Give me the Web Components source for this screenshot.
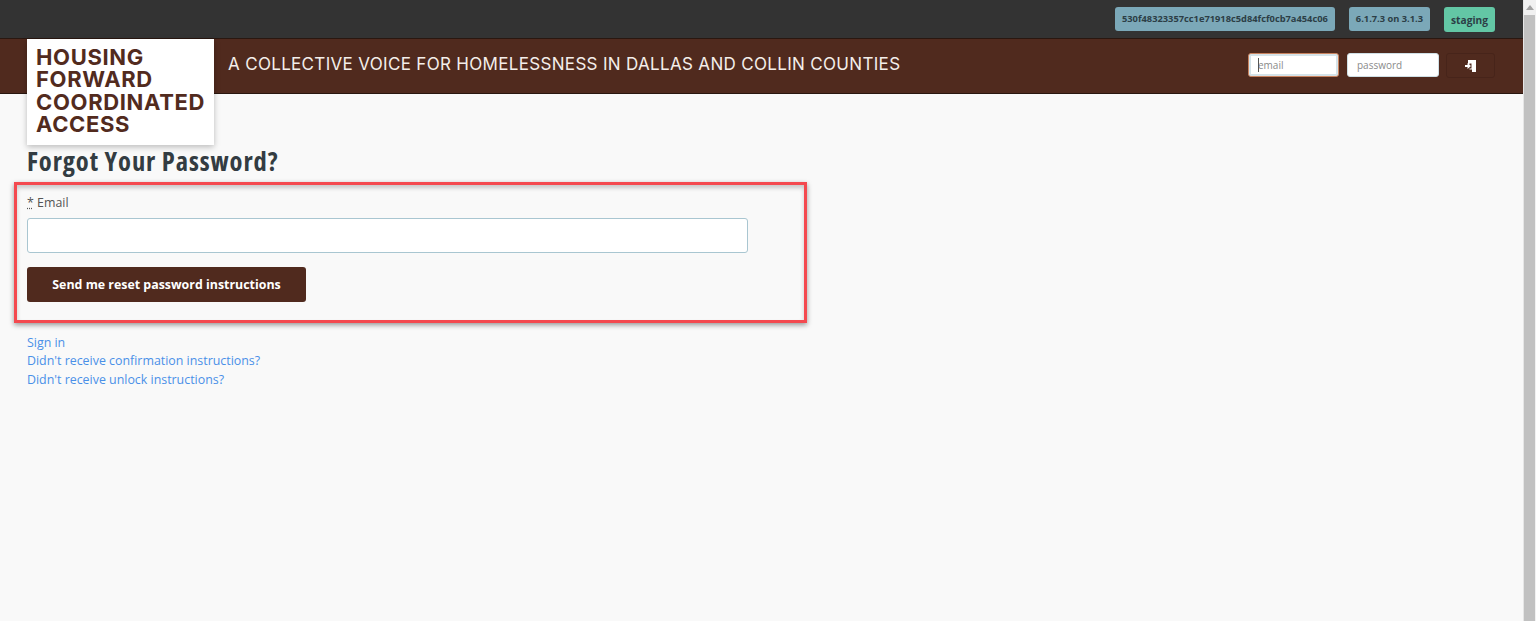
<!DOCTYPE html>
<html lang="en">
<head>
<meta charset="utf-8">
<title>Forgot Your Password?</title>
<style>
html, body { margin: 0; height: 100%; overflow: hidden; }
body { display: flex; font-family: "Open Sans", sans-serif; background: #f9f9f9; }
</style>
</head>
<body>
<app-shell>
    <top-bar>
        <env-badge>530f48323357cc1e71918c5d84fcf0cb7a454c06</env-badge>
        <env-badge>6.1.7.3 on 3.1.3</env-badge>
        <env-badge kind="staging">staging</env-badge>
    </top-bar>
    <site-header tagline="A COLLECTIVE VOICE FOR HOMELESSNESS IN DALLAS AND COLLIN COUNTIES"></site-header>
    <reset-page></reset-page>
</app-shell>
<fake-scrollbar></fake-scrollbar>

<script>
class AppShell extends HTMLElement {
    constructor() {
        super();
        this.attachShadow({ mode: 'open' });
        this.shadowRoot.innerHTML = `
            <style>
                :host { display: flex; flex-direction: column; flex: 1; min-width: 0; }
            </style>
            <slot></slot>
        `;
    }
}

class TopBar extends HTMLElement {
    constructor() {
        super();
        this.attachShadow({ mode: 'open' });
        this.shadowRoot.innerHTML = `
            <style>
                :host {
                    display: flex;
                    justify-content: flex-end;
                    align-items: flex-start;
                    gap: 14px;
                    height: 38px;
                    box-sizing: border-box;
                    padding: 7px 28px 0 0;
                    background: #333333;
                }
            </style>
            <slot></slot>
        `;
    }
}

class EnvBadge extends HTMLElement {
    constructor() {
        super();
        this.attachShadow({ mode: 'open' });
        this.shadowRoot.innerHTML = `
            <style>
                :host {
                    display: block;
                    height: 24px;
                    padding: 0 7px;
                    border-radius: 3px;
                    background: #7ba8b8;
                    color: #2c3e46;
                    font: 700 9.3px/23px "Open Sans", sans-serif;
                    white-space: nowrap;
                }
                :host([kind="staging"]) {
                    height: 25px;
                    background: #63c7a5;
                    font-size: 10.2px;
                    line-height: 26px;
                }
            </style>
            <slot></slot>
        `;
    }
}

class SiteHeader extends HTMLElement {
    constructor() {
        super();
        this.attachShadow({ mode: 'open' });
    }

    connectedCallback() {
        const tagline = this.getAttribute('tagline');
        this.shadowRoot.innerHTML = `
            <style>
                :host {
                    display: flex;
                    align-items: flex-start;
                    height: 56px;
                    box-sizing: border-box;
                    padding-left: 27px;
                    background: #502a1e;
                    border-top: 1px solid #2a1710;
                    border-bottom: 1px solid #2a1710;
                }
                .logo {
                    box-sizing: border-box;
                    width: 187px;
                    height: 106px;
                    padding: 7px 0 0 9px;
                    background: #fff;
                    color: #522b1e;
                    font: 700 22px/22.3px "Inter", "Liberation Sans", sans-serif;
                    letter-spacing: 0.65px;
                    box-shadow: 0 2px 6px rgba(0, 0, 0, 0.25);
                    position: relative;
                    z-index: 2;
                }
                .tagline {
                    margin: 15px 0 0 14px;
                    color: #f4eeea;
                    font: 400 17px/21px "Inter", "Liberation Sans", sans-serif;
                    letter-spacing: 0.32px;
                    white-space: nowrap;
                }
                form {
                    display: flex;
                    gap: 7px;
                    margin: 14px 28px 0 auto;
                }
                .email-wrap { position: relative; display: block; margin-right: 1px; }
                .email-wrap::after {
                    content: "";
                    position: absolute;
                    left: 10px;
                    top: 5px;
                    width: 1px;
                    height: 14px;
                    background: #555;
                }
                input {
                    display: block;
                    box-sizing: border-box;
                    width: 92px;
                    height: 24px;
                    padding: 0 9px;
                    border: 1px solid #cfdfe5;
                    border-radius: 3px;
                    background: #fff;
                    font: 400 10px "Open Sans", sans-serif;
                    outline: none;
                }
                input::placeholder { color: #8a8a8a; opacity: 1; }
                input.focus {
                    width: 91px;
                    border-color: #c9835f;
                    box-shadow: inset 0 0 0 2px #d5e3e9;
                }
                button {
                    box-sizing: border-box;
                    display: flex;
                    align-items: center;
                    justify-content: center;
                    width: 49px;
                    height: 25px;
                    padding: 0;
                    border: 1px solid #47241a;
                    border-radius: 3px;
                    background: #502a1e;
                }
            </style>
            <div class="logo">HOUSING<br>FORWARD<br>COORDINATED<br>ACCESS</div>
            <div class="tagline">${tagline}</div>
            <form>
                <span class="email-wrap"><input class="focus" placeholder="email" aria-label="email"></span>
                <input placeholder="password" aria-label="password">
                <button type="button" aria-label="Sign in">
                    <svg width="11" height="12" viewBox="0 0 11 12">
                        <path d="M3 0h8v12h-4v-2.500h-2.500v-1h2v-5h-2v1h-1.500z" fill="#fff"/>
                        <path d="M0 5h2.500v-2l3.500 3-3.500 3v-2h-2.500z" fill="#fff"/>
                    </svg>
                </button>
            </form>
        `;
    }
}

class ResetPage extends HTMLElement {
    constructor() {
        super();
        this.attachShadow({ mode: 'open' });
        this.shadowRoot.innerHTML = `
            <style>
                :host {
                    display: block;
                    flex: 1;
                    padding: 0 27px;
                    background: #f9f9f9;
                    color: #444;
                    font: 400 12.4px/18.6px "Open Sans", sans-serif;
                }
                h1 {
                    margin: 0;
                    height: 88px;
                    box-sizing: border-box;
                    padding-top: 49px;
                    color: #333c42;
                    font: 700 26.5px/36px "Open Sans", sans-serif;
                    font-stretch: 75%;
                    letter-spacing: 0.9px;
                    white-space: nowrap;
                }
                .form-box {
                    box-sizing: border-box;
                    width: 793px;
                    height: 141px;
                    margin-left: -13px;
                    padding: 8px 0 0 10px;
                    border: 3px solid #f4494f;
                    box-shadow: 0 2px 5px rgba(0, 0, 0, 0.4), inset 0 3px 4px rgba(0, 0, 0, 0.2);
                }
                label { display: block; height: 18px; line-height: 20px; color: #555; }
                abbr { text-decoration: underline dotted; }
                .field {
                    display: block;
                    box-sizing: border-box;
                    width: 721px;
                    height: 35px;
                    margin: 7px 0 14px;
                    border: 1px solid #a9c6d1;
                    border-radius: 3px;
                    background: #fff;
                    outline: none;
                }
                .send {
                    display: block;
                    box-sizing: border-box;
                    width: 279px;
                    height: 35px;
                    padding: 0;
                    border: 0;
                    border-radius: 3px;
                    background: #502a1e;
                    color: #fff;
                    font: 700 12.4px "Open Sans", sans-serif;
                }
                nav { display: flex; flex-direction: column; margin-top: 10.700px; }
                a { color: #4a90e8; text-decoration: none; }
            </style>
            <h1>Forgot Your Password?</h1>
            <div class="form-box">
                <label><abbr title="required">*</abbr> Email</label>
                <input class="field" type="email" aria-label="Email">
                <button class="send" type="button">Send me reset password instructions</button>
            </div>
            <nav>
                <a href="#">Sign in</a>
                <a href="#">Didn't receive confirmation instructions?</a>
                <a href="#">Didn't receive unlock instructions?</a>
            </nav>
        `;
    }
}

class FakeScrollbar extends HTMLElement {
    constructor() {
        super();
        this.attachShadow({ mode: 'open' });
        this.shadowRoot.innerHTML = `
            <style>
                :host {
                    display: flex;
                    flex-direction: column;
                    flex: 0 0 13px;
                    box-sizing: border-box;
                    padding-right: 1px;
                    background: #f1f1f1;
                    border-left: 1px solid #e6e6e6;
                }
                .arrow { height: 15px; display: flex; align-items: center; justify-content: center; }
                .thumb { flex: 1; background: #c1c1c1; }
            </style>
            <div class="arrow">
                <svg width="8" height="5" viewBox="0 0 8 5"><path d="M4 0l4 5h-8z" fill="#a3a3a3"/></svg>
            </div>
            <div class="thumb"></div>
        `;
    }
}

customElements.define('app-shell', AppShell);
customElements.define('top-bar', TopBar);
customElements.define('env-badge', EnvBadge);
customElements.define('site-header', SiteHeader);
customElements.define('reset-page', ResetPage);
customElements.define('fake-scrollbar', FakeScrollbar);
</script>
</body>
</html>
